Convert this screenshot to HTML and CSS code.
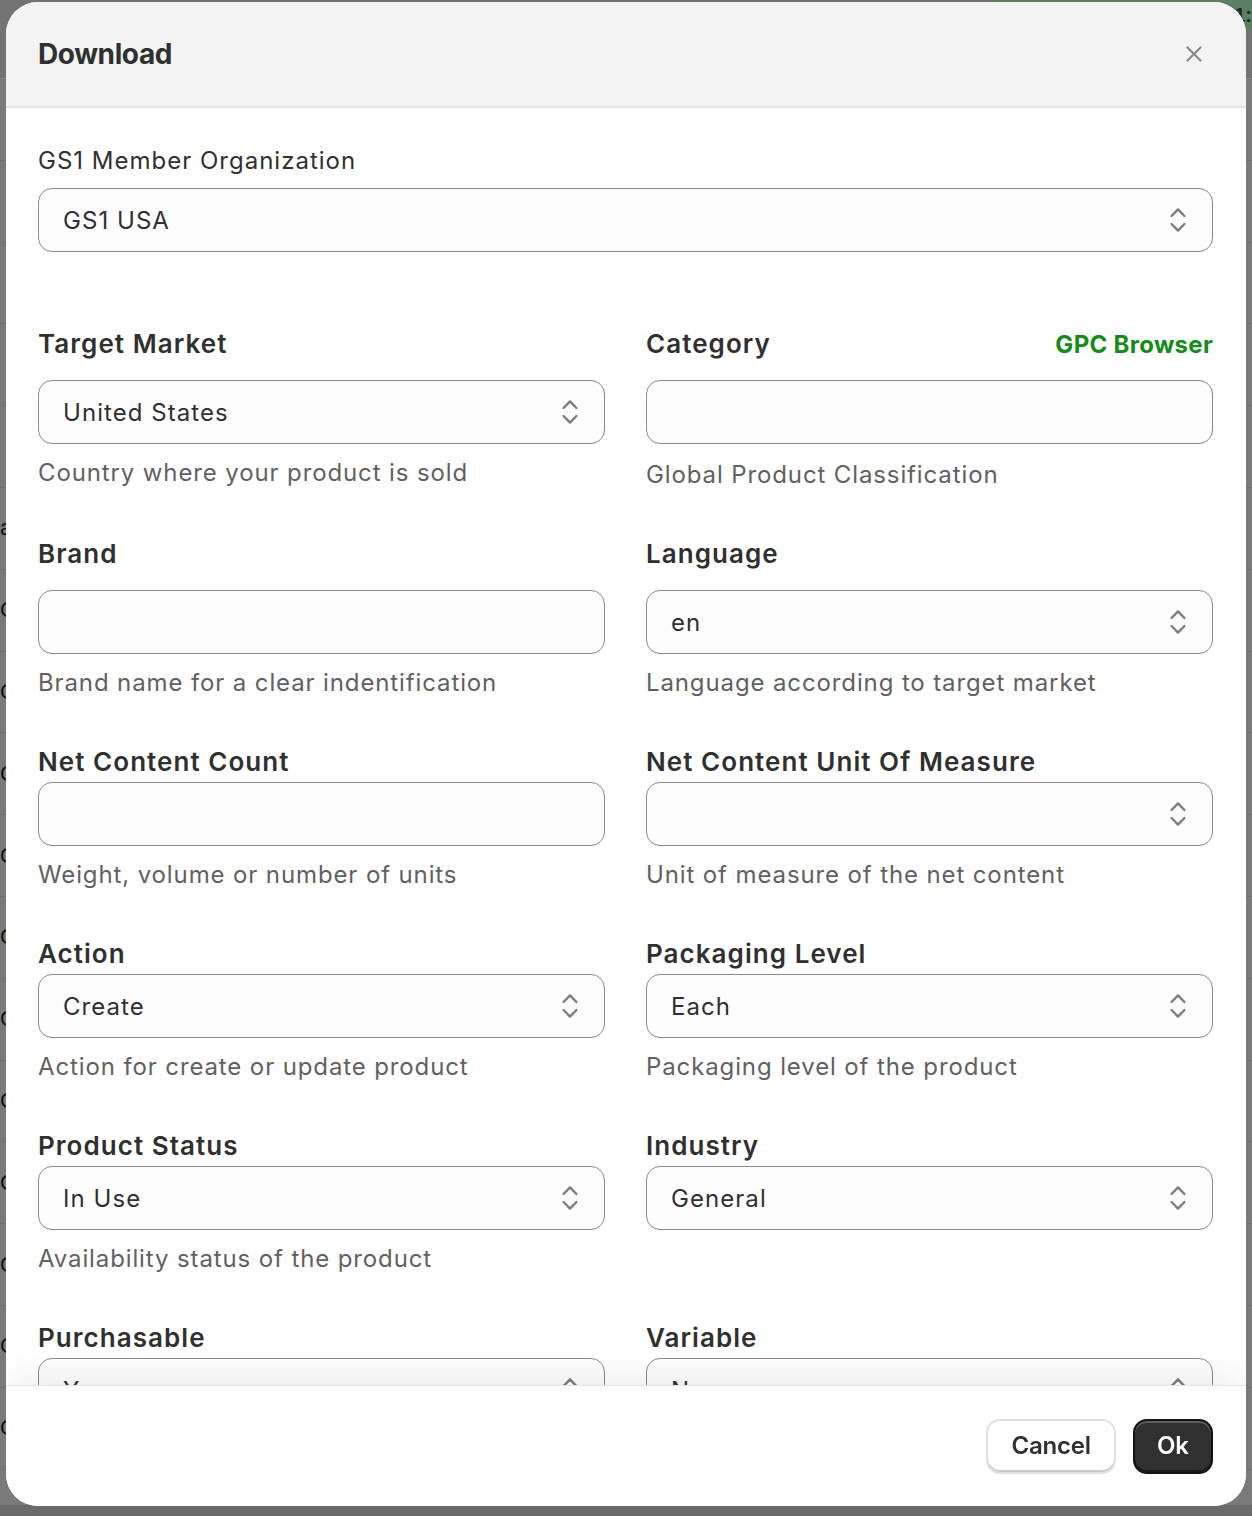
FILE: index.html
```html
<!DOCTYPE html>
<html lang="en">
<head>
<meta charset="utf-8">
<title>Download</title>
<link rel="stylesheet" href="styles.css">
</head>
<body>
<div class="backdrop">
  <div class="bd-top"><div class="bd-green"><span>1:</span></div></div>
  <div class="bd-row"></div>
  <div class="bd-row"></div>
  <div class="bd-row"></div>
  <div class="bd-row"></div>
  <div class="bd-row"></div>
  <div class="bd-row"><span>a</span></div>
  <div class="bd-row"><span>C</span></div>
  <div class="bd-row"><span>C</span></div>
  <div class="bd-row"><span>C</span></div>
  <div class="bd-row"><span>C</span></div>
  <div class="bd-row"><span>C</span></div>
  <div class="bd-row"><span>C</span></div>
  <div class="bd-row"><span>C</span></div>
  <div class="bd-row"><span>C</span></div>
  <div class="bd-row"><span>C</span></div>
  <div class="bd-row"><span>C</span></div>
  <div class="bd-row"><span>C</span></div>
</div>

<div class="modal">
  <header class="modal-header">
    <h2 class="modal-title">Download</h2>
    <button class="close-btn" aria-label="Close">
      <svg width="16" height="16" viewBox="0 0 16 16"><path d="M1.5 1.5 14.5 14.5M14.5 1.5 1.5 14.5" stroke="#8a8a8a" stroke-width="2.2" stroke-linecap="round" fill="none"/></svg>
    </button>
  </header>

  <div class="modal-body">
    <div class="org">
      <div class="org-label">GS1 Member Organization</div>
      <div class="control"><span>GS1 USA</span><svg class="chev" width="16" height="26" viewBox="0 0 16 26"><path d="M1.6 9 8 2.4 14.4 9M1.6 17 8 23.6 14.4 17" stroke="#7d7d7d" stroke-width="2.4" stroke-linecap="round" stroke-linejoin="round" fill="none"/></svg></div>
    </div>

    <div class="grid">
      <div class="field spaced">
        <div class="label-row"><span class="label">Target Market</span></div>
        <div class="control"><span>United States</span><svg class="chev" width="16" height="26" viewBox="0 0 16 26"><path d="M1.6 9 8 2.4 14.4 9M1.6 17 8 23.6 14.4 17" stroke="#7d7d7d" stroke-width="2.4" stroke-linecap="round" stroke-linejoin="round" fill="none"/></svg></div>
        <div class="help">Country where your product is sold</div>
      </div>
      <div class="field spaced">
        <div class="label-row"><span class="label">Category</span><span class="link">GPC Browser</span></div>
        <div class="control"></div>
        <div class="help low">Global Product Classification</div>
      </div>

      <div class="field spaced">
        <div class="label-row"><span class="label">Brand</span></div>
        <div class="control"></div>
        <div class="help">Brand name for a clear indentification</div>
      </div>
      <div class="field spaced">
        <div class="label-row"><span class="label">Language</span></div>
        <div class="control"><span>en</span><svg class="chev" width="16" height="26" viewBox="0 0 16 26"><path d="M1.6 9 8 2.4 14.4 9M1.6 17 8 23.6 14.4 17" stroke="#7d7d7d" stroke-width="2.4" stroke-linecap="round" stroke-linejoin="round" fill="none"/></svg></div>
        <div class="help">Language according to target market</div>
      </div>

      <div class="field">
        <div class="label-row"><span class="label">Net Content Count</span></div>
        <div class="control"></div>
        <div class="help">Weight, volume or number of units</div>
      </div>
      <div class="field">
        <div class="label-row"><span class="label">Net Content Unit Of Measure</span></div>
        <div class="control"><span></span><svg class="chev" width="16" height="26" viewBox="0 0 16 26"><path d="M1.6 9 8 2.4 14.4 9M1.6 17 8 23.6 14.4 17" stroke="#7d7d7d" stroke-width="2.4" stroke-linecap="round" stroke-linejoin="round" fill="none"/></svg></div>
        <div class="help">Unit of measure of the net content</div>
      </div>

      <div class="field">
        <div class="label-row"><span class="label">Action</span></div>
        <div class="control"><span>Create</span><svg class="chev" width="16" height="26" viewBox="0 0 16 26"><path d="M1.6 9 8 2.4 14.4 9M1.6 17 8 23.6 14.4 17" stroke="#7d7d7d" stroke-width="2.4" stroke-linecap="round" stroke-linejoin="round" fill="none"/></svg></div>
        <div class="help">Action for create or update product</div>
      </div>
      <div class="field">
        <div class="label-row"><span class="label">Packaging Level</span></div>
        <div class="control"><span>Each</span><svg class="chev" width="16" height="26" viewBox="0 0 16 26"><path d="M1.6 9 8 2.4 14.4 9M1.6 17 8 23.6 14.4 17" stroke="#7d7d7d" stroke-width="2.4" stroke-linecap="round" stroke-linejoin="round" fill="none"/></svg></div>
        <div class="help">Packaging level of the product</div>
      </div>

      <div class="field">
        <div class="label-row"><span class="label">Product Status</span></div>
        <div class="control"><span>In Use</span><svg class="chev" width="16" height="26" viewBox="0 0 16 26"><path d="M1.6 9 8 2.4 14.4 9M1.6 17 8 23.6 14.4 17" stroke="#7d7d7d" stroke-width="2.4" stroke-linecap="round" stroke-linejoin="round" fill="none"/></svg></div>
        <div class="help">Availability status of the product</div>
      </div>
      <div class="field">
        <div class="label-row"><span class="label">Industry</span></div>
        <div class="control"><span>General</span><svg class="chev" width="16" height="26" viewBox="0 0 16 26"><path d="M1.6 9 8 2.4 14.4 9M1.6 17 8 23.6 14.4 17" stroke="#7d7d7d" stroke-width="2.4" stroke-linecap="round" stroke-linejoin="round" fill="none"/></svg></div>
      </div>

      <div class="field">
        <div class="label-row"><span class="label">Purchasable</span></div>
        <div class="control"><span>Yes</span><svg class="chev" width="16" height="26" viewBox="0 0 16 26"><path d="M1.6 9 8 2.4 14.4 9M1.6 17 8 23.6 14.4 17" stroke="#7d7d7d" stroke-width="2.4" stroke-linecap="round" stroke-linejoin="round" fill="none"/></svg></div>
      </div>
      <div class="field">
        <div class="label-row"><span class="label">Variable</span></div>
        <div class="control"><span>No</span><svg class="chev" width="16" height="26" viewBox="0 0 16 26"><path d="M1.6 9 8 2.4 14.4 9M1.6 17 8 23.6 14.4 17" stroke="#7d7d7d" stroke-width="2.4" stroke-linecap="round" stroke-linejoin="round" fill="none"/></svg></div>
      </div>
    </div>
  </div>

  <footer class="modal-footer">
    <button class="btn btn-secondary">Cancel</button>
    <button class="btn btn-primary">Ok</button>
  </footer>
</div>
</body>
</html>
```

FILE: styles.css
```css
* {
  box-sizing: border-box;
}

html,
body {
  margin: 0;
  height: 1516px;
  overflow: hidden;
}

body {
  font-family: Inter, "Noto Sans", "Liberation Sans", sans-serif;
  background: #7a7a7a;
  color: #303030;
}

/* backdrop page behind the modal overlay */
.backdrop {
  position: fixed;
  inset: 0;
  z-index: 0;
  display: flex;
  flex-direction: column;
  background: linear-gradient(to bottom, #7a7a7a 0, #7a7a7a 1505px, #6a6a6a 1505px);
  overflow: hidden;
}

.bd-top {
  flex: none;
  height: 79px;
  background: #737373;
  border-bottom: 1px solid #858585;
  display: flex;
  justify-content: flex-end;
}

.bd-green {
  width: 260px;
  height: 30px;
  background: #5e7e63;
  display: flex;
  justify-content: flex-end;
  align-items: flex-start;
  font: 700 20px/24px "Liberation Sans", sans-serif;
  color: #1b2a1d;
  padding-top: 3px;
}

.bd-row {
  flex: none;
  height: 81.8px;
  border-bottom: 1px solid #6f6f6f;
  display: flex;
  align-items: center;
  font: 400 22px/1 "Liberation Sans", sans-serif;
  color: #111;
}

/* modal */
.modal {
  position: relative;
  z-index: 1;
  margin: 2px 6px 0;
  height: 1504px;
  background: #fff;
  border-radius: 32px;
  overflow: hidden;
  display: flex;
  flex-direction: column;
}

.modal-header {
  flex: none;
  height: 106px;
  background: #f3f3f3;
  border-bottom: 2px solid #e3e3e3;
  display: flex;
  align-items: center;
  justify-content: space-between;
  padding: 0 43px 0 32px;
}

.modal-title {
  margin: 0;
  font-size: 28px;
  font-weight: 700;
  color: #303030;
  letter-spacing: -0.4px;
}

.close-btn {
  border: 0;
  background: none;
  padding: 0;
  width: 18px;
  height: 18px;
  display: flex;
  align-items: center;
  justify-content: center;
}

.modal-body {
  flex: 1;
  min-height: 0;
  overflow: hidden;
  padding: 39px 33px 0 32px;
}

.org-label {
  font-size: 24px;
  line-height: 28px;
  color: #303030;
  letter-spacing: 1px;
  margin-bottom: 13px;
}

.control {
  height: 64px;
  border: 1px solid #8a8a8a;
  border-radius: 14px;
  background: #fdfdfd;
  display: flex;
  align-items: center;
  justify-content: space-between;
  padding: 0 26px 0 24px;
  font-size: 24px;
  letter-spacing: 1.05px;
  color: #303030;
}

.chev {
  flex: none;
}

.grid {
  display: grid;
  grid-template-columns: 1fr 1fr;
  column-gap: 41px;
  row-gap: 49px;
  margin-top: 78px;
}

.label-row {
  height: 28px;
  display: flex;
  align-items: center;
  justify-content: space-between;
  margin-bottom: 6px;
}

.field.spaced .label-row {
  margin-bottom: 22px;
}

.label {
  font-size: 26px;
  font-weight: 600;
  line-height: 28px;
  letter-spacing: 1.05px;
  color: #303030;
}

.link {
  font-size: 24px;
  font-weight: 700;
  letter-spacing: 0.3px;
  color: #168a1a;
}

.help {
  margin-top: 13px;
  font-size: 24px;
  line-height: 32px;
  letter-spacing: 0.88px;
  color: #616161;
}

.help.low {
  margin-top: 15px;
}

.modal-footer {
  position: relative;
  flex: none;
  height: 121px;
  background: #fff;
  border-top: 1px solid #e3e3e3;
  box-shadow: 0 -16px 30px -8px rgba(0, 0, 0, 0.07);
  display: flex;
  justify-content: flex-end;
  align-items: center;
  gap: 17px;
  padding-right: 33px;
}

.btn {
  height: 55px;
  padding: 0 23px;
  border-radius: 14px;
  font-family: Inter, "Noto Sans", sans-serif;
  font-size: 24px;
  line-height: 1;
  font-weight: 600;
}

.btn-secondary {
  background: #fff;
  color: #303030;
  border: 2px solid #e0e0e0;
  box-shadow: inset 0 -2px 0 #c9c9c9;
  letter-spacing: -0.2px;
}

.btn-primary {
  background: #303030;
  color: #fff;
  border: 2px solid #141414;
  box-shadow: inset 0 2px 0 rgba(255, 255, 255, 0.22), inset 0 -2px 0 #1a1a1a;
  padding: 0 22px;
}
```
